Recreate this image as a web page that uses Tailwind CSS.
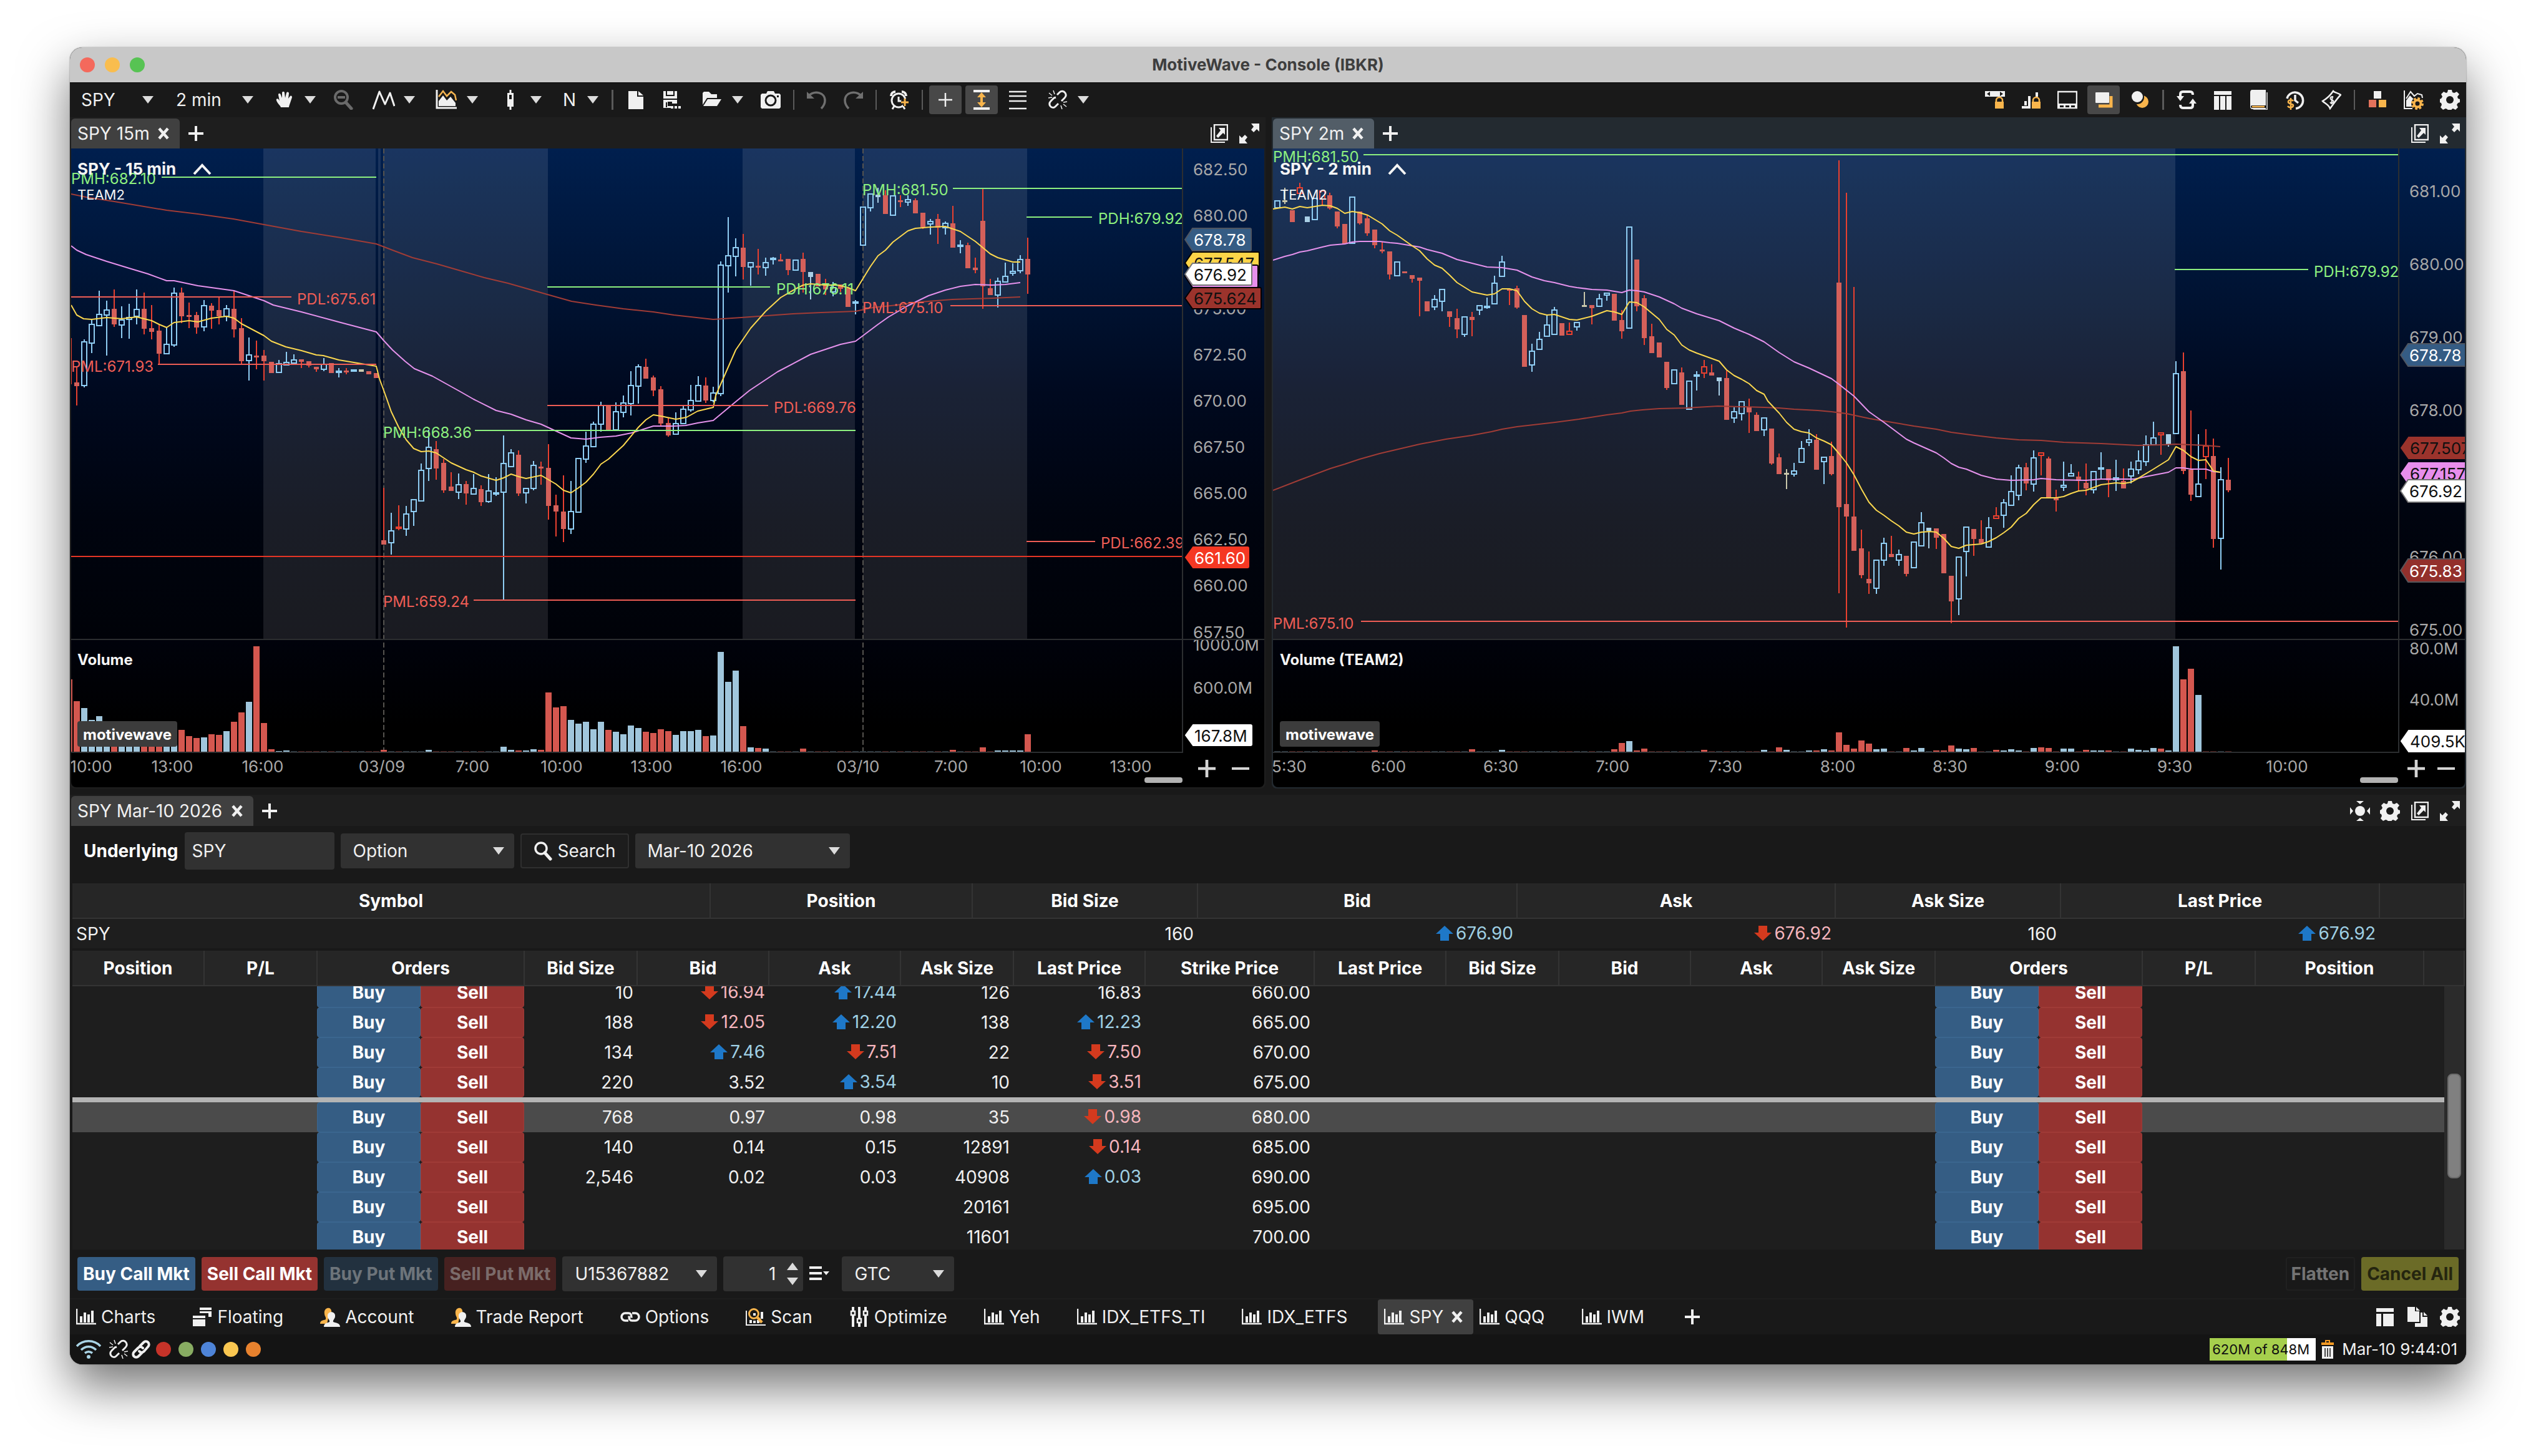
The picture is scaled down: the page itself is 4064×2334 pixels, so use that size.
<!DOCTYPE html>
<html lang="en">
<head>
    <meta charset="UTF-8">
    <meta name="viewport" content="width=device-width, initial-scale=1.0">
    <title>MotiveWave - Console (IBKR)</title>
    <script src="https://cdn.jsdelivr.net/npm/@tailwindcss/browser@4"></script>
</head>
<body class="bg-white font-['Inter','Liberation_Sans',sans-serif] text-[28px] leading-[34px] text-[#f0f0f0]">

    <!-- Icon set -->
    <svg class="hidden" aria-hidden="true">
        <symbol id="i-tri" viewBox="0 0 18 12"><path d="M0 0h18L9 12z" fill="#dcdcdc"/></symbol>
        <symbol id="i-close" viewBox="0 0 20 20"><path d="M3 2l14 16M17 2L3 18" stroke="currentColor" stroke-width="4.5" fill="none"/></symbol>
        <symbol id="i-plus" viewBox="0 0 24 24"><path d="M12 0v24M0 12h24" stroke="currentColor" stroke-width="4" fill="none"/></symbol>
        <symbol id="i-hand" viewBox="0 0 32 32"><path d="M10 28c-1-3-6-7-7-11-1-3 2-4 4-1l1 2L6 8c0-3 3-3 4 0l2 5V5c0-3 4-3 4 0l1 8 2-8c1-2 4-2 4 1l-1 8 3-4c2-1 3 0 3 2l-3 9c-1 3-2 5-2 7z" fill="currentColor"/></symbol>
        <symbol id="i-zoomout" viewBox="0 0 32 32"><circle cx="13" cy="12" r="10" stroke="#6a6a6a" stroke-width="4" fill="none"/><path d="M7 12h12" stroke="#6a6a6a" stroke-width="4"/><path d="M20 20l9 10" stroke="#6a6a6a" stroke-width="5" stroke-linecap="round"/></symbol>
        <symbol id="i-wave" viewBox="0 0 36 32"><path d="M1 31L11 3l9 20 8-18 7 21" stroke="currentColor" stroke-width="3" fill="none" stroke-linejoin="round"/></symbol>
        <symbol id="i-area" viewBox="0 0 34 32"><path d="M2 0v29h32" stroke="currentColor" stroke-width="3" fill="none"/><path d="M5 26V18l7-9 6 8 6-6 8 10v5z" fill="currentColor"/><path d="M5 11l7-9 6 8 7-7 6 5 2 9" stroke="#f4b450" stroke-width="2.5" fill="none"/></symbol>
        <symbol id="i-candle" viewBox="0 0 32 32"><path d="M16 0v32" stroke="currentColor" stroke-width="3"/><rect x="11" y="5" width="10" height="22" fill="currentColor"/><rect x="14" y="8" width="4" height="7" fill="#191919"/></symbol>
        <symbol id="i-file" viewBox="0 0 32 32"><path d="M4 2h14v9h10v20H4z" fill="currentColor"/><path d="M20 2l8 7h-8z" fill="currentColor"/></symbol>
        <symbol id="i-save" viewBox="0 0 32 32"><path d="M2 2h22v12H2zM2 16h22v6h-8v-3H9v7h6v3H2z" fill="currentColor"/><path d="M7 2v7h12V2M7 20v8" stroke="#191919" stroke-width="2" fill="none"/><path d="M14 26h4v4h-4zM20 26h4v4h-4zM26 26h4v4h-4z" fill="currentColor"/></symbol>
        <symbol id="i-folder" viewBox="0 0 32 32"><path d="M1 24V5l2-2h8l4 4h9v6H8z" fill="currentColor"/><path d="M9 15h22l-7 11H2z" fill="currentColor"/></symbol>
        <symbol id="i-camera" viewBox="0 0 34 32"><path d="M1 8l2-2h7l2-4h10l2 4h7l2 2v20l-2 2H3l-2-2z" fill="currentColor"/><circle cx="17" cy="17" r="8" fill="none" stroke="#191919" stroke-width="3"/><path d="M27 9h3v3h-3z" fill="#191919"/></symbol>
        <symbol id="i-undo" viewBox="0 0 34 32"><path d="M3 10C14 0 30 4 30 17c0 6-3 10-6 13" stroke="#6f6f6f" stroke-width="3.5" fill="none"/><path d="M1 3v11h12z" fill="#6f6f6f"/></symbol>
        <symbol id="i-redo" viewBox="0 0 34 32"><path d="M31 10C20 0 4 4 4 17c0 6 3 10 6 13" stroke="#6f6f6f" stroke-width="3.5" fill="none"/><path d="M33 3v11H21z" fill="#6f6f6f"/></symbol>
        <symbol id="i-alarm" viewBox="0 0 32 32"><g fill="none" stroke="currentColor" stroke-width="3"><circle cx="15" cy="17" r="11"/><path d="M15 11v7h5M8 26l-3 5M22 26l3 5"/><path d="M3 10c0-4 3-7 7-7M27 10c0-4-3-7-7-7" stroke-width="4"/></g><path d="M25 14v12M19 20h12" stroke="#191919" stroke-width="6"/><path d="M25 14v12M19 20h12" stroke="#f9b54c" stroke-width="3"/></symbol>
        <symbol id="i-cross" viewBox="0 0 32 32"><path d="M16 5v22M5 16h22" stroke="currentColor" stroke-width="2.5"/></symbol>
        <symbol id="i-updown" viewBox="0 0 32 32"><path d="M3 2h26M3 30h26" stroke="currentColor" stroke-width="4"/><path d="M16 4l7 8h-5v8h5l-7 8-7-8h5v-8H9z" fill="#f9b54c"/></symbol>
        <symbol id="i-lines" viewBox="0 0 32 32"><path d="M2 3h28M2 10h28M2 18h28M2 30h28" stroke="currentColor" stroke-width="2.5"/></symbol>
        <symbol id="i-unlink" viewBox="0 0 32 32"><g fill="none" stroke="currentColor" stroke-width="3"><path d="M15 8l4-4c3-3 7-2 9 1s1 6-1 8l-5 5M17 22l-5 5c-2 2-6 2-8-1s-1-6 1-8l5-5 3-1"/><path d="M9 1l2 6M2 5l5 4M1 13l6-1M23 31l-2-6M30 27l-5-4M31 19l-6 1" stroke-width="1.5"/></g></symbol>
        <symbol id="i-link" viewBox="0 0 32 32"><g fill="none" stroke="currentColor" stroke-width="4" stroke-linecap="round"><path d="M14 11l6-6c5-5 12 2 7 7l-6 7c-3 3-6 2-8 0M18 21l-6 6c-5 5-12-2-7-7l6-6c3-3 6-2 8 0"/></g></symbol>
        <symbol id="i-lockx" viewBox="0 0 32 32"><path d="M0 2h32v9H0z" fill="currentColor"/><path d="M8 3v7L3 6.500zM24 3v7l5-3.500z" fill="#191919"/><path d="M18 20v-3a5 5 0 0110 0v3" fill="none" stroke="#f9b54c" stroke-width="2.500"/><path d="M16 19h14v11H16z" fill="#f9b54c"/></symbol>
        <symbol id="i-locky" viewBox="0 0 32 32"><path d="M1 26h14v4H1zM5 18h4v7H5zM11 10h4v16h-4zM23 4h4v7h-4z" fill="currentColor"/><path d="M19 20v-3a5 5 0 0110 0v3" fill="none" stroke="#f9b54c" stroke-width="2.500"/><path d="M17 19h14v11H17z" fill="#f9b54c"/></symbol>
        <symbol id="i-panel" viewBox="0 0 32 32"><path d="M1 3h30v26H1z" fill="none" stroke="currentColor" stroke-width="2.500"/><path d="M1 22h30v8H1z" fill="currentColor"/><path d="M4 25h6v3H4zM13 25h6v3h-6zM22 25h6v3h-6z" fill="#191919"/></symbol>
        <symbol id="i-stack" viewBox="0 0 32 32"><path d="M28 10v16H8" fill="none" stroke="#f9b54c" stroke-width="5"/><rect x="3" y="4" width="22" height="17" rx="1" fill="currentColor"/></symbol>
        <symbol id="i-circles" viewBox="0 0 32 32"><circle cx="20" cy="19" r="10" fill="#f9b54c"/><circle cx="12" cy="12" r="11" fill="#191919"/><circle cx="12" cy="11" r="9" fill="currentColor"/></symbol>
        <symbol id="i-sync" viewBox="0 0 32 32"><g fill="none" stroke="currentColor" stroke-width="4"><path d="M6 12V7c0-2 1-4 4-4h12c3 0 4 2 4 5M26 19v6c0 2-1 4-4 4H10c-3 0-4-2-4-5"/></g><path d="M0 10h12l-6 8zM20 22h12l-6-8z" fill="currentColor"/></symbol>
        <symbol id="i-cols" viewBox="0 0 32 32"><path d="M2 2h28v6H2zM2 10h8v22H2zM12 10h8v22h-8zM22 10h8v22h-8z" fill="currentColor"/></symbol>
        <symbol id="i-book" viewBox="0 0 32 32"><path d="M5 0h22v25H5a2 2 0 000 4h22v2H6c-3 0-4-2-4-4V4c0-2 1-4 3-4z" fill="currentColor"/><path d="M29 4v28H7" stroke="currentColor" stroke-width="1.500" fill="none"/><path d="M5 27h20" stroke="#f9b54c" stroke-width="2.500"/></symbol>
        <symbol id="i-clock" viewBox="0 0 32 32"><path d="M3 14A13 13 0 1117 30" fill="none" stroke="currentColor" stroke-width="3.500"/><path d="M16 8v9l5 4" fill="none" stroke="currentColor" stroke-width="3.500"/><path d="M13 18c-2-3-9-2-8 2 1 3 8 2 8 5 0 4-7 4-9 1M9 13v19" fill="none" stroke="#f9b54c" stroke-width="2.500"/></symbol>
        <symbol id="i-ticket" viewBox="0 0 32 32"><path d="M2 18C9 14 15 8 19 2c2 3 7 2 12 6-6 6-11 14-17 22C12 24 6 22 2 18z" fill="none" stroke="currentColor" stroke-width="2.500"/><path d="M19 12c-2-2-6 0-4 3s6 1 4 5c-1 2-4 2-5 0M18 10l-2 13" fill="none" stroke="currentColor" stroke-width="2"/></symbol>
        <symbol id="i-blocks" viewBox="0 0 32 32"><path d="M10 2h12v12H10z" fill="currentColor"/><path d="M2 16h12v12H2z" fill="#e2725b"/><path d="M18 16h12v12H18z" fill="#f9b54c"/></symbol>
        <symbol id="i-gear" viewBox="0 0 32 32"><path d="M13 0h6l1 4 3 1 4-2 4 4-3 4 1 3 3 1v5l-3 1-2 3 2 4-4 4-4-2-2 1-1 4h-5l-1-4-3-1-4 2-4-4 2-4-1-3-3-1v-5l3-1 2-3-2-4 4-4 4 2 2-1z" fill="currentColor"/><circle cx="16" cy="16" r="6" fill="#191919"/></symbol>
        <symbol id="i-chartgear" viewBox="0 0 32 32"><path d="M1 1v29h13" stroke="currentColor" stroke-width="2" fill="none"/><path d="M4 14l7-11 6 7 5-4 7 2 1 5" stroke="currentColor" stroke-width="2" fill="none"/><path d="M4 27V17l6-8 6 6-3 6 1 6z" fill="currentColor"/><circle cx="22" cy="22" r="10" fill="#191919"/><circle cx="22" cy="22" r="5.500" fill="none" stroke="#f9b54c" stroke-width="4"/><circle cx="22" cy="22" r="8" fill="none" stroke="#f9b54c" stroke-width="4" stroke-dasharray="3.500 2.800"/></symbol>
        <symbol id="i-popout" viewBox="0 0 28 30"><path d="M6 1h21v24H6z" stroke="currentColor" stroke-width="2.500" fill="none"/><path d="M1 5v24h22" stroke="currentColor" stroke-width="2" fill="none"/><path d="M13 6h10v11l-3-3-8 8-3-3 7-9z" fill="currentColor"/></symbol>
        <symbol id="i-expand" viewBox="0 0 32 32"><path d="M19 0h13v13l-4-4-5 5-4-4 4-5zM0 19l4 4 5-5 4 4-4 5 4 5H0z" fill="currentColor"/></symbol>
        <symbol id="i-target" viewBox="0 0 32 32"><circle cx="16" cy="16" r="8" fill="currentColor"/><path d="M10 0h12l-6 5zM10 32h12l-6-5zM0 10v12l5-6zM32 10v12l-5-6z" fill="currentColor"/></symbol>
        <symbol id="i-search" viewBox="0 0 32 32"><circle cx="13" cy="12" r="9" stroke="currentColor" stroke-width="3.500" fill="none"/><path d="M19 19l9 10" stroke="currentColor" stroke-width="5" stroke-linecap="round"/></symbol>
        <symbol id="i-list" viewBox="0 0 32 24"><path d="M0 2h20M0 11h20M0 20h20" stroke="currentColor" stroke-width="4"/><path d="M22 8h10l-5 6z" fill="currentColor"/></symbol>
        <symbol id="i-bars" viewBox="0 0 32 26"><path d="M1 0v24h31" stroke="currentColor" stroke-width="2.500" fill="none"/><path d="M6 12h4v10H6zM12 6h4v16h-4zM18 9h4v13h-4zM24 3h4v19h-4z" fill="currentColor"/></symbol>
        <symbol id="i-float" viewBox="0 0 32 30"><path d="M12 0h19v4H12zM12 6h19v9h-5V9H12z" fill="currentColor"/><path d="M1 13h20v4H1zM1 19h20v11H1z" fill="currentColor"/></symbol>
        <symbol id="i-user" viewBox="0 0 32 32"><path d="M7 11C5 0 20-2 18 10l-5 8-2 9H0c0-6 5-5 9-7 1-4-2-5-2-9z" fill="#f9b54c"/><path d="M6 32c0-6 5-6 9-8 1-3-3-5-3-9-1-9 13-9 12 0 0 4-4 6-3 9 5 2 11 2 11 8z" fill="currentColor"/></symbol>
        <symbol id="i-chain" viewBox="0 0 32 16"><g fill="none" stroke="currentColor" stroke-width="3.500"><path d="M18 9.500c0-5-1-7.500-5-7.500H8a6 6 0 000 12h5"/><path d="M14 6.500c0 5 1 7.500 5 7.500h5a6 6 0 000-12h-5"/></g></symbol>
        <symbol id="i-scan" viewBox="0 0 32 28"><path d="M1 4v23h31" stroke="currentColor" stroke-width="2" fill="none"/><path d="M6 19h4v5H6zM12 20h4v4h-4zM18 19h4v5h-4zM24 6h4v11h-4z" fill="currentColor"/><circle cx="13" cy="9" r="9.500" fill="#191919"/><path d="M12 8h4v4h-4z" fill="currentColor"/><circle cx="13" cy="9" r="7.500" fill="none" stroke="#f9b54c" stroke-width="3"/><path d="M19 15l7 8" stroke="#f9b54c" stroke-width="4.500"/></symbol>
        <symbol id="i-sliders" viewBox="0 0 32 32"><path d="M6 0v32M16 0v32M26 0v32" stroke="currentColor" stroke-width="4"/><g fill="#191919" stroke="currentColor" stroke-width="2.500"><rect x="3" y="7" width="6" height="6"/><rect x="13" y="19" width="6" height="6"/><rect x="23" y="7" width="6" height="6"/></g></symbol>
        <symbol id="i-layout" viewBox="0 0 32 32"><path d="M2 2h28v6H2zM2 11h8v20H2zM13 11h17v20H13z" fill="currentColor"/></symbol>
        <symbol id="i-copy" viewBox="0 0 32 32"><path d="M0 0h12v7h7v17H0z" fill="currentColor"/><path d="M14 0l6 6h-6zM26 8l6 6h-6z" fill="currentColor"/><path d="M21 9h3v7h8v16H12v-6h9z" fill="currentColor"/></symbol>
        <symbol id="i-wifi" viewBox="0 0 40 30"><g fill="none" stroke="#a9d4e6" stroke-width="3.500"><path d="M1 10C11-1 29-1 39 10M8 16c7-7 17-7 24 0M14 21c4-3 8-3 12 0"/></g><circle cx="20" cy="27" r="3" fill="#a9d4e6"/></symbol>
        <symbol id="i-trash" viewBox="0 0 22 30"><path d="M1 4h20v4H1zM7 0h8v4h-2V2H9v2H7z" fill="#f59a23"/><path d="M2 10h18v20H2z" fill="currentColor"/><path d="M7 13v14M11 13v14M15 13v14" stroke="#141414" stroke-width="1.500"/></symbol>
        <symbol id="i-up" viewBox="0 0 28 24"><path d="M14 0l14 13h-7v11H7V13H0z" fill="#1e78c8"/></symbol>
        <symbol id="i-down" viewBox="0 0 28 24"><path d="M14 24L0 11h7V0h14v11h7z" fill="#d43a1e"/></symbol>
    </svg>

    <div class="px-28 pt-19 pb-36">
        <div class="overflow-hidden rounded-[20px] bg-[#191919] shadow-[0_36px_80px_rgba(0,0,0,0.55),0_0_2px_rgba(0,0,0,0.5)]">

            <!-- Title bar -->
            <header class="relative flex h-[57px] items-center border-b border-black bg-[#c8c8c8] pl-4">
                <div class="flex gap-4">
                    <span class="size-6 rounded-full bg-[#f4695c]"></span>
                    <span class="size-6 rounded-full bg-[#f9bd4e]"></span>
                    <span class="size-6 rounded-full bg-[#57c353]"></span>
                </div>
                <h1 class="absolute inset-x-0 text-center text-[26px] font-bold text-[#3e3e3e]">MotiveWave - Console (IBKR)</h1>
            </header>

            <!-- Toolbar -->
            <nav class="flex h-[55px] items-center pb-0.5">
                <div class="flex items-center gap-9 pl-[18px] pr-6">
                    <label class="flex items-center"><select aria-label="Symbol" class="w-[98px] appearance-none bg-transparent outline-none"><option>SPY</option></select><svg class="h-3 w-[18px]"><use href="#i-tri"/></svg></label>
                    <label class="flex items-center"><select aria-label="Bar size" class="w-[106px] appearance-none bg-transparent outline-none"><option>2 min</option></select><svg class="h-3 w-[18px]"><use href="#i-tri"/></svg></label>
                </div>
                <button aria-label="Pan" class="flex w-[94px] items-center gap-4 pl-2.5"><svg class="size-8"><use href="#i-hand"/></svg><svg class="h-3 w-[18px]"><use href="#i-tri"/></svg></button>
                <button aria-label="Zoom out" class="w-[65px] pl-2.5"><svg class="size-8"><use href="#i-zoomout"/></svg></button>
                <button aria-label="Elliott wave" class="flex w-[101px] items-center gap-3.5 pl-2"><svg class="h-8 w-9"><use href="#i-wave"/></svg><svg class="h-3 w-[18px]"><use href="#i-tri"/></svg></button>
                <button aria-label="Studies" class="flex w-[102px] items-center gap-4 pl-2"><svg class="h-8 w-[34px]"><use href="#i-area"/></svg><svg class="h-3 w-[18px]"><use href="#i-tri"/></svg></button>
                <button aria-label="Bar type" class="flex w-[94px] items-center gap-4 pl-2.5"><svg class="size-8"><use href="#i-candle"/></svg><svg class="h-3 w-[18px]"><use href="#i-tri"/></svg></button>
                <button aria-label="Scale" class="flex w-[90px] items-center gap-[18px] pl-4">N<svg class="h-3 w-[18px]"><use href="#i-tri"/></svg></button>
                <span class="mx-1 h-8 w-[3px] bg-[#5a5a5a]"></span>
                <div class="flex items-center gap-1.5 px-1.5">
                    <button aria-label="New" class="grid h-[46px] w-[52px] place-items-center"><svg class="size-8"><use href="#i-file"/></svg></button>
                    <button aria-label="Save" class="grid h-[46px] w-[52px] place-items-center"><svg class="size-8"><use href="#i-save"/></svg></button>
                    <button aria-label="Open" class="flex h-[46px] w-[94px] items-center gap-4 pl-4"><svg class="size-8"><use href="#i-folder"/></svg><svg class="h-3 w-[18px]"><use href="#i-tri"/></svg></button>
                    <button aria-label="Snapshot" class="grid h-[46px] w-[52px] place-items-center"><svg class="h-8 w-[34px]"><use href="#i-camera"/></svg></button>
                </div>
                <span class="mx-1 h-8 w-[2px] bg-[#5a5a5a]"></span>
                <div class="flex items-center gap-1.5 px-1.5">
                    <button aria-label="Undo" class="grid h-[46px] w-[52px] place-items-center"><svg class="h-8 w-[34px]"><use href="#i-undo"/></svg></button>
                    <button aria-label="Redo" class="grid h-[46px] w-[52px] place-items-center"><svg class="h-8 w-[34px]"><use href="#i-redo"/></svg></button>
                </div>
                <span class="mx-1 h-8 w-[2px] bg-[#5a5a5a]"></span>
                <button aria-label="Add alert" class="mx-1.5 grid h-[46px] w-[52px] place-items-center"><svg class="size-8"><use href="#i-alarm"/></svg></button>
                <span class="mx-1 h-8 w-[2px] bg-[#5a5a5a]"></span>
                <div class="flex items-center gap-1.5 px-1.5">
                    <button aria-label="Crosshair" class="grid h-[46px] w-[52px] place-items-center rounded bg-[#484848]"><svg class="size-8"><use href="#i-cross"/></svg></button>
                    <button aria-label="Auto scale" class="grid h-[46px] w-[52px] place-items-center rounded bg-[#484848]"><svg class="size-8"><use href="#i-updown"/></svg></button>
                    <button aria-label="Grid lines" class="grid h-[46px] w-[52px] place-items-center"><svg class="size-8"><use href="#i-lines"/></svg></button>
                    <button aria-label="Link" class="flex h-[46px] w-[90px] items-center gap-4 pl-4"><svg class="size-8"><use href="#i-unlink"/></svg><svg class="h-3 w-[18px]"><use href="#i-tri"/></svg></button>
                </div>
                <div class="ml-auto flex items-center gap-1.5">
                    <button aria-label="Lock time" class="grid h-[46px] w-[52px] place-items-center"><svg class="size-8"><use href="#i-lockx"/></svg></button>
                    <button aria-label="Lock price" class="grid h-[46px] w-[52px] place-items-center"><svg class="size-8"><use href="#i-locky"/></svg></button>
                    <button aria-label="Trade panel" class="grid h-[46px] w-[52px] place-items-center"><svg class="size-8"><use href="#i-panel"/></svg></button>
                    <button aria-label="Orders" class="grid h-[46px] w-[52px] place-items-center rounded bg-[#484848]"><svg class="size-8"><use href="#i-stack"/></svg></button>
                    <button aria-label="Positions" class="grid h-[46px] w-[52px] place-items-center"><svg class="size-8"><use href="#i-circles"/></svg></button>
                    <span class="mx-1 h-8 w-[3px] bg-[#5a5a5a]"></span>
                    <button aria-label="Refresh" class="grid h-[46px] w-[52px] place-items-center"><svg class="size-8"><use href="#i-sync"/></svg></button>
                    <button aria-label="Depth" class="grid h-[46px] w-[52px] place-items-center"><svg class="size-8"><use href="#i-cols"/></svg></button>
                    <button aria-label="Journal" class="grid h-[46px] w-[52px] place-items-center"><svg class="size-8"><use href="#i-book"/></svg></button>
                    <button aria-label="Trade history" class="grid h-[46px] w-[52px] place-items-center"><svg class="size-8"><use href="#i-clock"/></svg></button>
                    <button aria-label="Order ticket" class="grid h-[46px] w-[52px] place-items-center"><svg class="size-8"><use href="#i-ticket"/></svg></button>
                    <span class="mx-1 h-8 w-[2px] bg-[#5a5a5a]"></span>
                    <button aria-label="Components" class="grid h-[46px] w-[52px] place-items-center"><svg class="size-8"><use href="#i-blocks"/></svg></button>
                    <button aria-label="Chart settings" class="grid h-[46px] w-[52px] place-items-center"><svg class="size-8"><use href="#i-chartgear"/></svg></button>
                    <button aria-label="Preferences" class="grid h-[46px] w-[52px] place-items-center"><svg class="size-8"><use href="#i-gear"/></svg></button>
                </div>
            </nav>

            <!-- Charts -->
            <div class="flex gap-2.5">
                <section class="min-w-0 flex-[1916] rounded-b-lg bg-[#1e1e1e] px-0.5 pb-0.5">
                    <div class="flex h-[50px] items-center pt-0.5">
                        <div class="flex h-12 items-center gap-3 rounded-t-md bg-[#404040] pl-2.5 pr-4">SPY 15m<button aria-label="Close SPY 15m" class="flex"><svg class="size-5"><use href="#i-close"/></svg></button></div>
                        <button aria-label="Add tab" class="ml-3.5"><svg class="size-6"><use href="#i-plus"/></svg></button>
                        <div class="ml-auto flex items-center gap-[18px] pr-2">
                            <button aria-label="Pop out"><svg class="h-[30px] w-7"><use href="#i-popout"/></svg></button>
                            <button aria-label="Maximise"><svg class="size-8"><use href="#i-expand"/></svg></button>
                        </div>
                    </div>
                    <div class="relative">
                        <svg id="chart15" class="block h-auto w-full rounded-b-lg" viewBox="114 238 1912 1024"></svg>
                        <div class="absolute bottom-4 right-6 flex gap-[26px] text-[#d4d4d4]">
                            <button aria-label="Zoom in"><svg class="size-7"><use href="#i-plus"/></svg></button>
                            <button aria-label="Zoom out" class="grid w-7 place-items-center"><span class="h-1 w-7 bg-[#d4d4d4]"></span></button>
                        </div>
                    </div>
                </section>
                <section class="min-w-0 flex-[1914] rounded-b-lg bg-[#232a30] px-0.5 pb-0.5">
                    <div class="flex h-[50px] items-center pt-0.5">
                        <div class="flex h-12 items-center gap-3 rounded-t-md bg-[#525d67] pl-2.5 pr-4">SPY 2m<button aria-label="Close SPY 2m" class="flex"><svg class="size-5"><use href="#i-close"/></svg></button></div>
                        <button aria-label="Add tab" class="ml-3.5"><svg class="size-6"><use href="#i-plus"/></svg></button>
                        <div class="ml-auto flex items-center gap-[18px] pr-2">
                            <button aria-label="Pop out"><svg class="h-[30px] w-7"><use href="#i-popout"/></svg></button>
                            <button aria-label="Maximise"><svg class="size-8"><use href="#i-expand"/></svg></button>
                        </div>
                    </div>
                    <div class="relative">
                        <svg id="chart2" class="block h-auto w-full rounded-b-lg" viewBox="2040 238 1910 1024"></svg>
                        <div class="absolute bottom-4 right-4 flex gap-5 text-[#d4d4d4]">
                            <button aria-label="Zoom in"><svg class="size-7"><use href="#i-plus"/></svg></button>
                            <button aria-label="Zoom out" class="grid w-7 place-items-center"><span class="h-1 w-7 bg-[#d4d4d4]"></span></button>
                        </div>
                    </div>
                </section>
            </div>

            <!-- Option chain -->
            <section class="mt-2.5">
                <div class="flex h-[50px] items-center bg-[#1e1e1e] px-0.5 pt-0.5">
                    <div class="flex h-12 items-center gap-3.5 rounded-t-md bg-[#404040] pl-2.5 pr-4">SPY Mar-10 2026<button aria-label="Close SPY Mar-10 2026" class="flex"><svg class="size-5"><use href="#i-close"/></svg></button></div>
                    <button aria-label="Add tab" class="ml-3.5"><svg class="size-6"><use href="#i-plus"/></svg></button>
                    <div class="ml-auto flex items-center gap-4 pr-2">
                        <button aria-label="Centre"><svg class="size-8"><use href="#i-target"/></svg></button>
                        <button aria-label="Settings"><svg class="size-8"><use href="#i-gear"/></svg></button>
                        <button aria-label="Pop out" class="grid w-8 place-items-center"><svg class="h-[30px] w-7"><use href="#i-popout"/></svg></button>
                        <button aria-label="Maximise"><svg class="size-8"><use href="#i-expand"/></svg></button>
                    </div>
                </div>

                <form class="flex h-[92px] items-start pl-[22px] pt-2.5">
                    <div class="flex items-center gap-2.5">
                        <label for="underlying" class="font-bold text-white">Underlying</label>
                        <input id="underlying" type="text" value="SPY" class="h-[60px] w-60 rounded bg-[#313131] px-3 outline-none">
                        <label class="relative flex items-center"><select aria-label="Instrument" class="h-14 w-[278px] appearance-none rounded bg-[#313131] pl-5 outline-none"><option>Option</option></select><svg class="absolute right-4 h-3 w-[18px]"><use href="#i-tri"/></svg></label>
                        <button type="button" class="flex h-14 w-[174px] items-center gap-2 rounded border-2 border-[#2f2f2f] bg-[#1d1d1d] pl-[18px]"><svg class="size-8"><use href="#i-search"/></svg>Search</button>
                        <label class="relative flex items-center"><select aria-label="Expiry" class="h-14 w-[344px] appearance-none rounded bg-[#313131] pl-5 outline-none"><option>Mar-10 2026</option></select><svg class="absolute right-4 h-3 w-[18px]"><use href="#i-tri"/></svg></label>
                    </div>
                </form>

                <div class="pl-1 pr-[3px]">
                    <table class="w-full table-fixed bg-[#1e1e1e]">
                        <colgroup><col class="w-[1022px]"><col class="w-[420px]"><col class="w-[361px]"><col class="w-[512px]"><col class="w-[510px]"><col class="w-[361px]"><col class="w-[511px]"><col class="w-[136px]"></colgroup>
                        <thead class="bg-[#262626] text-white">
                            <tr class="h-14 [&>th]:border-b-2 [&>th]:border-r-2 [&>th]:border-[#343434]"><th>Symbol</th><th>Position</th><th>Bid Size</th><th>Bid</th><th>Ask</th><th>Ask Size</th><th>Last Price</th><th></th></tr>
                        </thead>
                        <tbody>
                            <tr class="h-12 text-right [&>td]:pr-1.5">
                                <td class="pl-1.5 text-left">SPY</td><td></td><td>160</td>
                                <td class="text-[#9fd0e4]"><span class="inline-flex items-center gap-1"><svg class="h-6 w-7"><use href="#i-up"/></svg>676.90</span></td>
                                <td class="text-[#f5b5bd]"><span class="inline-flex items-center gap-1"><svg class="h-6 w-7"><use href="#i-down"/></svg>676.92</span></td>
                                <td>160</td>
                                <td class="text-[#9fd0e4]"><span class="inline-flex items-center gap-1"><svg class="h-6 w-7"><use href="#i-up"/></svg>676.92</span></td>
                                <td></td>
                            </tr>
                        </tbody>
                    </table>

                    <table class="mt-1 w-full table-fixed">
                        <colgroup><col class="w-[211px]"><col class="w-[181px]"><col class="w-[332px]"><col class="w-[181px]"><col class="w-[211px]"><col class="w-[211px]"><col class="w-[181px]"><col class="w-[211px]"><col class="w-[271px]"><col class="w-[211px]"><col class="w-[181px]"><col class="w-[211px]"><col class="w-[211px]"><col class="w-[181px]"><col class="w-[332px]"><col class="w-[181px]"><col class="w-[270px]"><col class="w-[65px]"></colgroup>
                        <thead class="bg-[#262626] text-white">
                            <tr class="h-14 [&>th]:border-b-2 [&>th]:border-r-2 [&>th]:border-[#343434]"><th>Position</th><th>P/L</th><th>Orders</th><th>Bid Size</th><th>Bid</th><th>Ask</th><th>Ask Size</th><th>Last Price</th><th>Strike Price</th><th>Last Price</th><th>Bid Size</th><th>Bid</th><th>Ask</th><th>Ask Size</th><th>Orders</th><th>P/L</th><th>Position</th><th></th></tr>
                        </thead>
                    </table>
                    <div class="flex h-[422px] items-stretch overflow-hidden bg-[#1e1e1e]">
                        <div class="-mt-3.5 min-w-0 flex-1">
                            <table class="w-full table-fixed">
                                <colgroup><col class="w-[211px]"><col class="w-[181px]"><col class="w-[332px]"><col class="w-[181px]"><col class="w-[211px]"><col class="w-[211px]"><col class="w-[181px]"><col class="w-[211px]"><col class="w-[271px]"><col class="w-[211px]"><col class="w-[181px]"><col class="w-[211px]"><col class="w-[211px]"><col class="w-[181px]"><col class="w-[332px]"><col class="w-[181px]"><col class="w-[270px]"><col class="w-[33px]"></colgroup>
                                <tbody id="chain"></tbody>
                            </table>
                        </div>
                        <div class="flex w-8 justify-center bg-[#2b2b2b] pt-[140px]">
                            <div class="h-[168px] w-[22px] rounded-lg border-2 border-[#6a6a6a] bg-[#808080]"></div>
                        </div>
                    </div>
                </div>

                <!-- Order entry -->
                <div class="flex h-[78px] items-center gap-2.5 pl-3 pr-3">
                    <button class="h-[54px] rounded bg-[#355d84] px-[9px] font-bold text-white">Buy Call Mkt</button>
                    <button class="h-[54px] rounded bg-[#953330] px-[9px] font-bold text-white">Sell Call Mkt</button>
                    <button disabled class="h-[54px] rounded bg-[#22313f] px-[9px] font-bold text-[#6d747a]">Buy Put Mkt</button>
                    <button disabled class="h-[54px] rounded bg-[#472120] px-[9px] font-bold text-[#7b6b6a]">Sell Put Mkt</button>
                    <label class="relative flex items-center"><select aria-label="Account" class="h-14 w-[248px] appearance-none rounded bg-[#313131] pl-5 outline-none"><option>U15367882</option></select><svg class="absolute right-4 h-3 w-[18px]"><use href="#i-tri"/></svg></label>
                    <div class="relative flex items-center">
                        <input aria-label="Quantity" type="text" inputmode="numeric" value="1" class="h-14 w-32 rounded bg-[#313131] pr-11 text-right outline-none">
                        <div class="absolute right-2 flex flex-col gap-3">
                            <button aria-label="Increase" class="flex rotate-180"><svg class="h-3 w-[18px]"><use href="#i-tri"/></svg></button>
                            <button aria-label="Decrease" class="flex"><svg class="h-3 w-[18px]"><use href="#i-tri"/></svg></button>
                        </div>
                    </div>
                    <button aria-label="Presets" class="mr-2.5 flex"><svg class="h-6 w-8"><use href="#i-list"/></svg></button>
                    <label class="relative flex items-center"><select aria-label="Time in force" class="h-14 w-[180px] appearance-none rounded bg-[#313131] pl-5 outline-none"><option>GTC</option></select><svg class="absolute right-4 h-3 w-[18px]"><use href="#i-tri"/></svg></label>
                    <button disabled class="ml-auto h-[54px] rounded border-2 border-[#202020] px-[7px] font-bold text-[#747474]">Flatten</button>
                    <button class="h-[54px] rounded bg-[#6b6b27] px-[9px] font-bold text-[#25250f]">Cancel All</button>
                </div>
            </section>

            <!-- Workspace pages -->
            <nav class="flex h-[58px] items-center border-t-2 border-[#1e1e1e] [&>a]:flex [&>a]:h-14 [&>a]:items-center [&>a]:gap-2 [&>a]:pl-2.5">
                <a href="#" class="pr-[49px]"><svg class="h-[26px] w-8"><use href="#i-bars"/></svg>Charts</a>
                <a href="#" class="pr-[49px]"><svg class="h-[30px] w-8"><use href="#i-float"/></svg>Floating</a>
                <a href="#" class="pr-[49px]"><svg class="size-8"><use href="#i-user"/></svg>Account</a>
                <a href="#" class="pr-[49px]"><svg class="size-8"><use href="#i-user"/></svg>Trade Report</a>
                <a href="#" class="pr-[49px]"><svg class="h-4 w-8"><use href="#i-chain"/></svg>Options</a>
                <a href="#" class="pr-[49px]"><svg class="h-7 w-8"><use href="#i-scan"/></svg>Scan</a>
                <a href="#" class="pr-[49px]"><svg class="size-8"><use href="#i-sliders"/></svg>Optimize</a>
                <a href="#" class="pr-[49px]"><svg class="h-[26px] w-8"><use href="#i-bars"/></svg>Yeh</a>
                <a href="#" class="pr-[49px]"><svg class="h-[26px] w-8"><use href="#i-bars"/></svg>IDX_ETFS_TI</a>
                <a href="#" class="pr-[49px]"><svg class="h-[26px] w-8"><use href="#i-bars"/></svg>IDX_ETFS</a>
                <a href="#" aria-current="page" class="rounded bg-[#404040] pr-4"><svg class="h-[26px] w-8"><use href="#i-bars"/></svg>SPY<svg class="ml-1 size-5"><use href="#i-close"/></svg></a>
                <a href="#" class="pr-[49px]"><svg class="h-[26px] w-8"><use href="#i-bars"/></svg>QQQ</a>
                <a href="#" class="pr-[49px]"><svg class="h-[26px] w-8"><use href="#i-bars"/></svg>IWM</a>
                <button aria-label="Add page" class="ml-4"><svg class="size-6"><use href="#i-plus"/></svg></button>
                <div class="ml-auto flex items-center gap-5 pr-2.5">
                    <button aria-label="Layout"><svg class="size-8"><use href="#i-layout"/></svg></button>
                    <button aria-label="Copy page"><svg class="size-8"><use href="#i-copy"/></svg></button>
                    <button aria-label="Page settings"><svg class="size-8"><use href="#i-gear"/></svg></button>
                </div>
            </nav>

            <!-- Status bar -->
            <footer class="flex h-12 items-center bg-[#141414] pl-2.5 pr-3.5">
                <svg class="h-[30px] w-10"><use href="#i-wifi"/></svg>
                <svg class="ml-3 size-8"><use href="#i-unlink"/></svg>
                <svg class="ml-1 size-8"><use href="#i-link"/></svg>
                <div class="ml-2 flex gap-3">
                    <span class="size-6 rounded-full bg-[#c63329]"></span>
                    <span class="size-6 rounded-full bg-[#88ac62]"></span>
                    <span class="size-6 rounded-full bg-[#4e84d8]"></span>
                    <span class="size-6 rounded-full bg-[#fac751]"></span>
                    <span class="size-6 rounded-full bg-[#e8822e]"></span>
                </div>
                <div class="ml-auto flex items-center gap-2">
                    <span class="flex h-9 w-[170px] items-center bg-linear-to-r from-[#a6cf4d] from-73% to-white to-73% pl-1 text-[22px] text-[#101010]">620M of 848M</span>
                    <svg class="h-[30px] w-[22px]"><use href="#i-trash"/></svg>
                    <span class="ml-1 text-[26px]">Mar-10 9:44:01</span>
                </div>
            </footer>
        </div>
    </div>

    <script>
        // Candles: u = up, d = down, r = down but closed above its open, s = up below prior close, n = unchanged
        // then high, body top, body bottom and (if there is a lower wick) low
        const candles15 = `d,588,613,619,650 u,544,547,619,621 u,512,519,551,566 u,466,503,523 u,482,496,506,570 d,464,495,520,524 u,491,512,522,542 u,487,508,513,543 u,464,495,508,520 d,469,495,527,536
            d,489,526,532,544 d,520,530,567,583 u,525,551,568 u,461,469,554,556 d,461,469,507,518 d,485,505,508,526 d,500,505,525,535 u,481,489,525,531 d,486,490,498,527 d,475,497,507,520
            u,489,494,508,515 d,466,495,528,541 d,510,526,579,585 u,541,568,579,610 d,546,570,572,592 d,561,570,579,610 d,580,580,598 u,577,582,598 u,564,580,586 u,568,576,583
            d,576,576,580,590 d,579,579,586,589 d,588,588,592,596 u,574,583,593,595 d,582,582,598 u,590,594,598,605 d,590,594,597,600 u,592,592,596 n,592,592,596 d,595,595,600 d,598,598,606
            d,782,866,873 u,822,850,871,889 r,810,844,848,850 u,811,823,849,859 u,800,800,821,843 u,743,753,804 u,689,716,752,771 d,707,720,751,769 d,736,742,786,790 d,757,780,787
            u,759,776,790,800 d,771,776,791,809 u,760,782,793 d,778,784,805,811 u,760,786,805,806 u,765,789,791,795 u,698,742,790,961 u,720,725,749 d,722,729,791,795 u,782,782,791,807
            u,739,745,784,786 d,740,748,751,777 d,712,750,811,833 d,793,810,820,860 d,762,820,848,869 u,771,819,849,856 u,734,734,822 u,692,714,737,742 u,676,679,717 u,644,649,681,692
            d,649,649,690 u,645,659,690 u,634,645,662,669 u,595,617,648,666 u,584,587,620,647 d,575,588,607 d,602,605,626,635 d,619,624,679,682 d,669,678,698,700 u,661,678,697
            u,649,655,680 u,617,641,658,660 u,603,617,644 d,605,618,642,646 u,620,629,643,645 u,419,424,632,635 u,348,409,427,469 u,382,396,412,443 d,375,397,428,448 u,420,420,429,458
            d,399,426,428,440 u,413,420,430,442 u,412,413,417,424 d,407,416,418 d,415,415,433,441 u,416,416,434 d,405,415,436,469 s,436,436,444,480 d,439,439,459 d,447,457,464,473
            u,452,460,469,475 d,456,456,463,468 d,462,462,492 u,481,483,487,504 u,331,331,394 u,310,310,334,339 s,301,312,316,325 d,305,313,343 u,313,313,346 d,313,321,323,332
            u,313,319,325,330 d,318,321,342 d,341,341,364,367 u,351,354,360,376 d,343,351,365,391 u,355,357,366,376 d,330,358,397 u,385,392,396,406 d,389,393,430 d,413,429,433,438
            d,303,354,459,495 d,447,462,473 u,445,450,474,493 u,421,442,453 u,422,434,439,442 u,409,415,435,438 d,381,415,440,471`;
        const candles2 = `u,321,321,334 n,301,321,324,327 d,337,337,356 r,293,300,311 s,347,347,356 u,317,317,353 r,305,305,320,329 d,309,313,334,336 d,339,339,363,366 d,359,359,391
            u,315,315,391 d,339,339,358,360 d,345,350,374,378 d,368,368,393,398 d,387,400,402,406 d,403,403,440,448 u,419,419,443 d,435,435,438 d,441,441,447,453 d,445,445,450,507
            d,483,483,499 u,473,479,493,497 u,463,463,484,499 d,499,499,508,524 d,495,510,528,542 u,507,507,537,540 d,500,508,513,539 u,489,489,498,505 u,477,490,492,495 u,442,453,488
            u,410,419,444 d,463,463,464,489 d,458,462,493,495 d,505,505,588 u,551,562,586,596 u,532,543,561 u,505,520,540 u,492,496,537 d,518,518,538 r,517,530,537
            u,516,516,525,530 n,468,489,492 d,489,489,494,520 u,471,478,492 u,469,469,474,482 d,471,471,514 d,497,513,531,543 u,363,363,527 d,416,416,491,499 d,473,478,542,553
            d,519,539,566 d,549,549,573 d,580,580,622,625 u,592,592,616 d,589,597,649 u,610,610,657 u,595,600,604,626 r,577,587,599,606 d,584,597,602 s,605,605,611,634
            d,594,606,673 u,653,659,671,678 u,643,643,664,674 d,639,652,661,694 d,661,665,691 u,669,669,690,699 d,687,687,743,745 d,727,733,760 n,752,758,760,784 u,742,754,761,764
            u,707,718,742 u,688,704,710,715 d,696,705,753 u,732,732,741,776 d,708,731,760,762 d,257,453,813,951 d,309,808,828,1006 d,460,828,883 d,849,879,922,927 d,884,928,935,952
            u,897,897,944,952 u,862,870,899,907 d,859,888,893 u,881,888,899,907 d,891,891,920,924 u,868,868,911 u,821,837,876 s,846,846,851,879 d,847,847,862,880 d,856,856,919
            d,923,923,964,999 u,892,892,961,986 u,844,844,885,924 d,848,848,864,891 d,834,864,871 u,829,845,878 r,813,826,832 u,800,805,827,846 u,762,787,811 u,745,749,795,802
            d,742,749,775,786 u,722,733,777,788 r,725,725,731,762 d,732,735,798 d,785,798,802,820 u,740,777,782,787 u,744,758,764 d,756,764,771,787 d,743,774,783,794 u,755,755,786,791
            u,725,749,753,767 d,752,752,770,797 u,737,765,770,787 d,751,771,783 u,740,751,764,775 u,722,738,754,760 u,698,712,741,747 u,676,701,714 r,693,693,698,729 s,696,696,712,716
            u,579,598,696 d,565,595,755,760 d,658,753,793,803 u,696,775,797 r,688,714,733,768 d,703,731,864,878 u,749,768,864,913 d,734,769,786,789`;

        // Volume bar heights by candle index; the rest are too small to tell apart
        const volume15 = {0:82,1:71,2:52,3:58,4:36,5:36,6:36,7:36,8:36,9:36,10:36,11:36,12:36,13:39,14:36,15:26,16:23,17:24,18:29,19:28,20:34,21:49,22:64,23:81,24:170,25:47,26:5,27:2,28:3,
            41:4,47:4,57:9,58:4,59:3,60:3,61:5,62:4,63:96,64:72,65:74,66:52,67:46,68:49,69:37,70:49,71:36,72:33,73:29,74:43,75:39,76:33,77:31,78:37,79:34,80:28,81:34,82:34,83:36,84:26,85:27,
            86:161,87:113,88:131,89:42,90:8,91:7,92:6,97:6,117:4,121:8,123:3,124:3,125:3,126:3,127:29};
        const volume2 = {13:3,26:5,30:4,45:5,46:15,47:18,48:3,49:6,57:4,65:4,67:8,68:4,71:3,72:3,73:5,74:3,75:32,76:12,77:6,78:19,79:14,80:5,81:6,84:7,85:3,86:7,88:3,89:3,90:11,91:6,92:5,93:7,
            96:4,97:3,98:5,99:3,101:7,102:8,103:7,105:6,106:6,108:4,109:3,110:3,111:3,114:6,115:4,116:3,117:7,118:6,119:3,120:170,121:117,122:134,123:92};

        const svgText = (x, y, s, fill, size = 26, extra = '') => `<text x="${x}" y="${y}" font-size="${size}" fill="${fill}" ${extra}>${s}</text>`;
        const rect = (x, y, w, h, fill, extra = '') => `<rect x="${x}" y="${y}" width="${w}" height="${h}" fill="${fill}" ${extra}/>`;
        const hline = (x1, x2, y, color) => `<path d="M${x1} ${y}H${x2}" stroke="${color}" stroke-width="2"/>`;
        const curve = (points, color) => `<polyline points="${points}" fill="none" stroke="${color}" stroke-width="2" stroke-linejoin="round"/>`;
        const GREEN = '#8df07f', RED = '#ee5d55';

        function drawCandles(data, start) {
            return data.trim().split(/\s+/).map((row, i) => {
                const [type, ...v] = row.split(',');
                const [high, top, bottom, low = bottom] = v.map(Number);
                const x = start + i * 12;
                const hollow = type === 'u' || type === 'r';
                const color = { u: '#8fcdf3', s: '#a9cfe6', d: '#e8402f', r: '#e8402f', n: '#c9c7ab' }[type];
                const wick = `<path d="M${x} ${high}V${top}M${x} ${bottom}V${low}" stroke="${color}" stroke-width="2"/>`;
                const body = hollow
                    ? `<rect x="${x - 4}" y="${top + 1}" width="8" height="${Math.max(bottom - top - 2, 2)}" fill="none" stroke="${color}" stroke-width="2"/>`
                    : rect(x - 4, top, 8, Math.max(bottom - top, 3), type === 'd' ? '#d4605a' : color);
                return wick + body;
            }).join('');
        }

        function drawVolume(data, heights, start) {
            return data.trim().split(/\s+/).map((row, i) => {
                const up = 'usn'.includes(row[0]);
                const h = heights[i] || 2;
                const color = heights[i] ? (up ? '#a0c6dc' : '#d4574f') : (up ? '#34434c' : '#552522');
                return rect(start + i * 12 - 5, 1206 - h, 10, h, color);
            }).join('');
        }

        // Price marker with its tip pointing at the axis line
        function tag(x, y, h, right, fill, stroke, color, label) {
            return `<path d="M${x} ${y + h / 2}L${x + 12} ${y}H${right - 2}q2 0 2 2V${y + h - 2}q0 2 -2 2H${x + 12}Z" fill="${fill}" stroke="${stroke}" stroke-width="2"/>` + svgText(x + 14, y + h / 2 + 10, label, color);
        }

        function frame(id, x0, x1, axis) {
            const stops = list => list.map(([at, color]) => `<stop offset="${at}" stop-color="${color}"/>`).join('');
            return `<defs>
                <linearGradient id="sky-${id}" x1="0" y1="0" x2="0" y2="1">${stops([[0, '#001f4e'], [0.25, '#001537'], [0.5, '#00091f'], [0.75, '#00040f'], [1, '#000208']])}</linearGradient>
                <linearGradient id="night-${id}" x1="0" y1="0" x2="0" y2="1">${stops([[0, '#00020b'], [0.6, '#000000']])}</linearGradient>
                <clipPath id="plot-${id}"><rect x="${x0}" y="238" width="${axis - x0}" height="1024"/></clipPath></defs>`
                + rect(x0, 238, x1 - x0, 787, `url(#sky-${id})`) + rect(x0, 1025, x1 - x0, 237, `url(#night-${id})`);
        }

        function grid(x0, x1, axis) {
            return rect(x0, 1024, x1 - x0, 2, '#2c2e30') + rect(x0, 1205, axis - x0, 2, '#2c2e30') + rect(axis, 238, 2, 969, '#2c2e30');
        }

        function heading(x, title, volume, chevron) {
            return svgText(x, 280, title, '#f4f4f4', 26, 'font-weight="700"')
                + `<path d="M${chevron} 279l13-14 13 14" fill="none" stroke="#f4f4f4" stroke-width="4"/>`
                + svgText(x, 320, 'TEAM2', '#f4f4f4', 22)
                + svgText(x, 1066, volume, '#f4f4f4', 24, 'font-weight="700"')
                + rect(x, 1156, 160, 41, '#3c3c3c', 'rx="4"')
                + svgText(x + 9, 1186, 'motivewave', '#ffffff', 24, 'font-weight="700"');
        }

        document.getElementById('chart15').innerHTML = frame('15m', 114, 2026, 1894)
            + [[422, 180], [606, 4], [614, 264], [1190, 180], [1383, 263]].map(([x, w]) => rect(x, 238, w, 786, 'rgba(255,255,255,0.1)')).join('')
            + '<path d="M615 238V1206M1383 238V1206" stroke="#55534f" stroke-width="2" stroke-dasharray="8 4"/>'
            + rect(114, 1089, 2, 117, '#d4574f') + rect(114, 542, 1, 74, '#e8402f')
            + drawVolume(candles15, volume15, 123)
            + drawCandles(candles15, 123)
            + '<g clip-path="url(#plot-15m)">'
            + curve('114,311 138,316 183,323 267,337 317,343 374,351 423,360 483,371 546,381 603,391 629,401 661,413 700,423 738,434 776,445 814,454 877,472 916,483 955,489 999,495 1047,500 1080,505 1143,512 1188,509 1271,503 1316,501 1371,499 1399,493 1437,489 1475,484 1526,480 1590,478 1635,476', '#a03c36')
            + curve('114,394 123,401 138,408 171,419 207,430 237,439 267,450 279,450 317,458 375,466 423,482 438,489 483,500 546,517 603,532 615,546 629,561 649,579 664,591 693,603 738,628 759,640 795,658 819,664 843,673 867,680 891,691 915,702 939,704 961,701 987,699 1012,694 1047,683 1080,683 1099,682 1118,678 1143,674 1179,644 1201,626 1246,596 1299,568 1347,552 1371,547 1407,520 1424,508 1455,490 1488,474 1515,465 1539,459 1563,456 1590,457 1611,456 1635,453', '#e592ec')
            + curve('114,489 123,505 134,511 147,512 171,509 195,511 219,508 243,514 255,520 267,525 279,517 303,514 317,516 339,510 363,507 375,510 387,519 423,538 435,547 458,556 483,562 507,569 518,570 543,577 567,581 603,587 608,607 615,626 620,640 627,660 639,685 651,705 663,719 675,724 687,723 699,726 723,742 747,753 759,757 771,763 795,770 807,766 819,760 831,764 843,767 867,762 879,769 891,776 903,786 915,790 927,782 939,773 951,760 963,744 975,736 999,714 1023,685 1035,673 1047,665 1059,667 1083,672 1100,669 1118,659 1143,653 1147,634 1179,561 1203,526 1227,499 1251,477 1275,463 1287,457 1299,455 1323,457 1342,457 1359,461 1371,466 1395,427 1407,410 1419,401 1431,388 1455,370 1467,366 1491,364 1515,363 1539,371 1563,387 1587,407 1599,413 1623,420 1635,420', '#fbd84f')
            + hline(259, 603, 284, GREEN) + svgText(114, 295, 'PMH:682.10', GREEN, 24)
            + hline(114, 467, 476, RED) + svgText(476, 488, 'PDL:675.61', RED, 24)
            + hline(253, 603, 584, RED) + svgText(114, 596, 'PML:671.93', RED, 24)
            + hline(877, 1234, 460, GREEN) + svgText(1244, 472, 'PDH:676.11', GREEN, 24)
            + hline(877, 1231, 650, RED) + svgText(1240, 662, 'PDL:669.76', RED, 24)
            + hline(761, 1371, 690, GREEN) + svgText(614, 702, 'PMH:668.36', GREEN, 24)
            + hline(759, 1371, 962, RED) + svgText(614, 973, 'PML:659.24', RED, 24)
            + hline(114, 1894, 892, '#e53525')
            + hline(1527, 1894, 302, GREEN) + svgText(1382, 313, 'PMH:681.50', GREEN, 24)
            + hline(1645, 1750, 348, GREEN) + svgText(1760, 359, 'PDH:679.92', GREEN, 24)
            + hline(1523, 1894, 490, RED) + svgText(1382, 502, 'PML:675.10', RED, 24)
            + hline(1645, 1755, 868, RED) + svgText(1764, 879, 'PDL:662.39', RED, 24)
            + '</g>'
            + heading(124, 'SPY - 15 min', 'Volume', 311)
            + [['682.50', 281], ['680.00', 355], ['675.00', 504], ['672.50', 578], ['670.00', 652], ['667.50', 726], ['665.00', 800], ['662.50', 874], ['660.00', 948], ['657.50', 1023], ['600.0M', 1112]].map(([s, y]) => svgText(1912, y, s, '#a8a8a8')).join('')
            + '<clipPath id="volclip"><rect x="1896" y="1026" width="130" height="100"/></clipPath>' + svgText(1912, 1043, '1000.0M', '#a8a8a8', 26, 'clip-path="url(#volclip)"')
            + grid(114, 2026, 1894)
            + tag(1899, 366, 36, 2005, '#355c84', '#4f5560', '#ffffff', '678.78')
            + tag(1899, 404, 35, 2018, '#fdd448', '#000000', '#101010', '677.547')
            + tag(1899, 425, 36, 2016, '#e78eec', '#000000', '#101010', '676.411')
            + tag(1899, 422, 35, 2006, '#ffffff', '#777777', '#101010', '676.92')
            + tag(1899, 461, 34, 2021, '#9b332c', '#000000', '#101010', '675.624')
            + tag(1900, 877, 33, 2001, '#f53823', '#f53823', '#ffffff', '661.60')
            + tag(1900, 1162, 33, 2006, '#ffffff', '#ffffff', '#101010', '167.8M')
            + [['10:00', 146], ['13:00', 276], ['16:00', 421], ['03/09', 612], ['7:00', 757], ['10:00', 900], ['13:00', 1044], ['16:00', 1188], ['03/10', 1375], ['7:00', 1524], ['10:00', 1668], ['13:00', 1812]].map(([s, x]) => svgText(x, 1238, s, '#a8a8a8', 26, 'text-anchor="middle"')).join('')
            + rect(1834, 1246, 61, 9, '#b2b2b2', 'rx="4"');

        document.getElementById('chart2').innerHTML = frame('2m', 2040, 3950, 3843)
            + rect(2040, 238, 1446, 786, 'rgba(255,255,255,0.1)')
            + drawVolume(candles2, volume2, 2047)
            + '<g clip-path="url(#plot-2m)">'
            + drawCandles(candles2, 2047)
            + curve('2040,786 2084,769 2132,751 2155,744 2179,736 2211,727 2275,712 2317,704 2358,698 2390,692 2407,688 2431,684 2466,680 2492,677 2530,672 2575,665 2599,662 2613,659 2632,657 2659,655 2702,654 2753,651 2827,653 2851,654 2875,656 2913,658 2935,660 2959,663 2996,671 3020,675 3067,683 3103,688 3127,693 3165,698 3199,702 3235,705 3271,706 3307,709 3367,711 3426,714 3465,713 3487,712 3511,713 3535,714 3558,716', '#a03c36')
            + curve('2040,417 2059,411 2071,408 2083,404 2095,402 2119,396 2132,393 2155,391 2167,388 2179,387 2211,387 2227,389 2239,390 2275,396 2287,400 2311,406 2335,416 2359,422 2383,428 2407,429 2431,433 2455,444 2475,450 2491,453 2515,459 2527,461 2551,464 2575,465 2599,469 2611,465 2623,466 2635,468 2659,476 2683,487 2695,494 2719,503 2755,514 2779,526 2803,536 2827,548 2851,565 2875,580 2899,590 2935,607 2947,616 2971,635 2995,660 3019,677 3043,695 3055,704 3067,710 3103,726 3115,734 3127,743 3139,749 3151,752 3175,762 3199,768 3223,770 3259,769 3271,767 3295,769 3343,770 3367,768 3420,768 3439,764 3475,757 3487,750 3499,750 3511,752 3535,752 3547,756 3558,757', '#e592ec')
            + curve('2040,335 2059,332 2071,335 2083,331 2095,333 2119,329 2132,330 2143,334 2155,342 2167,339 2179,341 2192,345 2215,359 2227,370 2239,377 2263,394 2275,402 2287,415 2299,425 2311,430 2323,441 2335,453 2359,468 2383,473 2395,471 2407,463 2419,463 2431,466 2443,483 2455,495 2467,502 2479,505 2491,504 2515,512 2527,513 2539,510 2551,507 2575,498 2587,500 2599,504 2611,484 2623,485 2635,492 2659,512 2671,528 2683,537 2695,553 2707,561 2719,566 2755,579 2767,593 2779,602 2791,608 2803,615 2815,626 2827,632 2833,643 2851,662 2863,677 2875,688 2887,692 2899,694 2911,702 2923,707 2935,713 2947,727 2959,742 2971,761 2983,784 2995,805 3007,818 3019,826 3031,835 3043,843 3055,853 3067,856 3079,853 3092,852 3103,853 3115,863 3127,876 3139,879 3151,874 3163,873 3175,872 3187,868 3199,862 3211,854 3223,845 3235,831 3247,823 3259,809 3271,798 3295,798 3307,796 3319,791 3331,787 3343,786 3367,777 3391,774 3403,775 3415,773 3426,767 3451,752 3475,737 3487,716 3499,722 3511,732 3523,738 3535,737 3547,755 3558,757', '#fbd84f')
            + hline(2185, 3843, 248, GREEN) + svgText(2040, 260, 'PMH:681.50', GREEN, 24)
            + hline(3485, 3699, 432, GREEN) + svgText(3708, 444, 'PDH:679.92', GREEN, 24)
            + hline(2181, 3843, 996, RED) + svgText(2040, 1008, 'PML:675.10', RED, 24)
            + '</g>'
            + heading(2051, 'SPY - 2 min', 'Volume (TEAM2)', 2226)
            + [['681.00', 316], ['680.00', 433], ['679.00', 550], ['678.00', 667], ['676.00', 902], ['675.00', 1019], ['80.0M', 1049], ['40.0M', 1131]].map(([s, y]) => svgText(3861, y, s, '#a8a8a8')).join('')
            + grid(2040, 3950, 3843)
            + tag(3847, 551, 36, 3954, '#355c84', '#4f5560', '#ffffff', '678.78')
            + tag(3848, 701, 34, 3970, '#9b332c', '#9b332c', '#101010', '677.507')
            + tag(3848, 742, 34, 3970, '#e78eec', '#e78eec', '#101010', '677.157')
            + tag(3847, 769, 36, 3954, '#ffffff', '#777777', '#101010', '676.92')
            + tag(3847, 896, 37, 3954, '#93302c', '#55555a', '#ffffff', '675.83')
            + tag(3848, 1171, 34, 3960, '#ffffff', '#ffffff', '#101010', '409.5K')
            + [['5:30', 2066], ['6:00', 2225], ['6:30', 2405], ['7:00', 2584], ['7:30', 2765], ['8:00', 2945], ['8:30', 3125], ['9:00', 3305], ['9:30', 3485], ['10:00', 3665]].map(([s, x]) => svgText(x, 1238, s, '#a8a8a8', 26, 'text-anchor="middle"')).join('')
            + rect(3782, 1246, 61, 9, '#b2b2b2', 'rx="4"');

        // Option chain: bid size, bid, ask, ask size, last, strike (+ ticked up, - ticked down)
        const chain = [
            ['10', '-16.94', '+17.44', '126', '16.83', '660.00'],
            ['188', '-12.05', '+12.20', '138', '+12.23', '665.00'],
            ['134', '+7.46', '-7.51', '22', '-7.50', '670.00'],
            ['220', '3.52', '+3.54', '10', '-3.51', '675.00'],
            ['768', '0.97', '0.98', '35', '-0.98', '680.00'],
            ['140', '0.14', '0.15', '12891', '-0.14', '685.00'],
            ['2,546', '0.02', '0.03', '40908', '+0.03', '690.00'],
            ['', '', '', '20161', '', '695.00'],
            ['', '', '', '11601', '', '700.00']
        ];
        const orders = '<td class="p-0"><div class="flex h-12"><button class="h-12 flex-1 rounded border border-[#3b668f] bg-[#355d84] font-bold text-white">Buy</button><button class="h-12 flex-1 rounded border border-[#a03b37] bg-[#953330] font-bold text-white">Sell</button></div></td>';
        const cell = v => {
            if (v[0] === '+') return `<td class="pr-1.5 text-right text-[#9fd0e4]"><span class="inline-flex items-center gap-1"><svg class="h-6 w-7"><use href="#i-up"/></svg>${v.slice(1)}</span></td>`;
            if (v[0] === '-') return `<td class="pr-1.5 text-right text-[#f5b5bd]"><span class="inline-flex items-center gap-1"><svg class="h-6 w-7"><use href="#i-down"/></svg>${v.slice(1)}</span></td>`;
            return `<td class="pr-1.5 text-right">${v}</td>`;
        };
        document.getElementById('chain').innerHTML = chain.map((row, i) =>
            (i === 4 ? '<tr class="h-2 bg-[#b4b4b4]"><td colspan="18" class="p-0"></td></tr>' : '')
            + `<tr class="${i === 4 ? 'h-12 bg-[#4b4b4b]' : 'h-12'}"><td></td><td></td>${orders}${row.map(cell).join('')}<td></td><td></td><td></td><td></td><td></td>${orders}<td></td><td></td><td></td></tr>`
        ).join('');
    </script>
</body>
</html>
